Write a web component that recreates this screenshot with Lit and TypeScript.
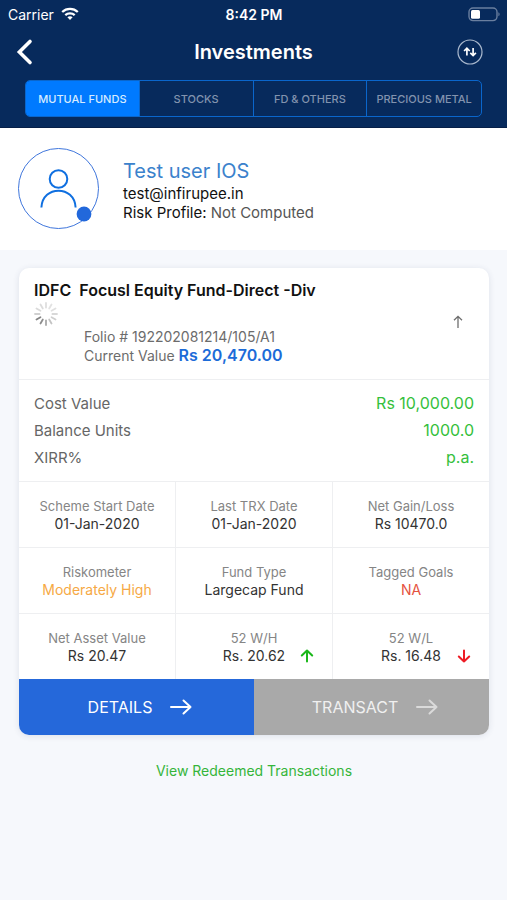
import { LitElement, css, html, svg, nothing } from "lit";
import { customElement, state } from "lit/decorators.js";
import { classMap } from "lit/directives/class-map.js";

type Tone = "plain" | "warn" | "danger";

interface Fact {
  label: string;
  value: string;
  tone?: Tone;
  trend?: "up" | "down";
}

const TABS = ["MUTUAL FUNDS", "STOCKS", "FD & OTHERS", "PRECIOUS METAL"];

const TOTALS: Fact[] = [
  { label: "Cost Value", value: "Rs 10,000.00" },
  { label: "Balance Units", value: "1000.0" },
  { label: "XIRR%", value: "p.a." },
];

const FACTS: Fact[] = [
  { label: "Scheme Start Date", value: "01-Jan-2020" },
  { label: "Last TRX Date", value: "01-Jan-2020" },
  { label: "Net Gain/Loss", value: "Rs 10470.0" },
  { label: "Riskometer", value: "Moderately High", tone: "warn" },
  { label: "Fund Type", value: "Largecap Fund" },
  { label: "Tagged Goals", value: "NA", tone: "danger" },
  { label: "Net Asset Value", value: "Rs 20.47" },
  { label: "52 W/H", value: "Rs. 20.62", trend: "up" },
  { label: "52 W/L", value: "Rs. 16.48", trend: "down" },
];

const SPOKE_GREYS = [
  "#dedede", "#e2e2e2", "#e0e0e0", "#d8d8d8", "#cfcfcf", "#c4c4c4",
  "#a8a8a8", "#8e8e8e", "#858585", "#d0d0d0", "#dadada", "#dcdcdc",
];

const arrowRight = html`
  <svg class="arrow-right" width="24" height="18" viewBox="0 0 24 18" aria-hidden="true">
    <path d="M2 9H21.5M14.5 2.5L21.5 9L14.5 15.5" fill="none" stroke="currentColor"
      stroke-width="2" stroke-linecap="round" stroke-linejoin="round" />
  </svg>`;

const trendIcon = (dir: "up" | "down") => html`
  <svg class="trend ${dir}" width="14" height="14" viewBox="0 0 14 14" aria-hidden="true">
    <path d=${dir === "up" ? "M7 12.5V1.5M1.8 6.5L7 1.5L12.2 6.5" : "M7 1.5V12.5M1.8 7.5L7 12.5L12.2 7.5"}
      fill="none" stroke="currentColor" stroke-width="2" stroke-linecap="round" stroke-linejoin="round" />
  </svg>`;

@customElement("app-header")
class AppHeader extends LitElement {
  @state() private active = 0;

  static styles = css`
    :host {
      display: block;
      background: #072a5c;
      color: #fff;
      padding: 0 25px 10px;
      border-bottom: 1px solid #061f48;
    }
    .status {
      display: grid;
      grid-template-columns: 1fr auto 1fr;
      align-items: center;
      height: 28px;
      margin: 0 -18px 0 -17px;
      font-size: 14px;
    }
    .carrier {
      display: flex;
      align-items: center;
      gap: 7px;
    }
    .time {
      font-weight: 600;
    }
    .battery {
      justify-self: end;
      display: block;
    }
    .bar {
      display: grid;
      grid-template-columns: 1fr auto 1fr;
      align-items: center;
      height: 48px;
      margin-bottom: 4px;
    }
    h1 {
      margin: 0;
      font-size: 20px;
      line-height: 24px;
      font-weight: 600;
    }
    button {
      font: inherit;
      color: inherit;
      background: none;
      border: 0;
      padding: 0;
      cursor: pointer;
    }
    .icon {
      display: flex;
    }
    .back {
      margin-left: -10px;
      justify-self: start;
    }
    .swap {
      justify-self: end;
      margin-right: -1px;
    }
    .tabs {
      display: grid;
      grid-template-columns: repeat(4, 1fr);
      border: 1px solid #0a66cc;
      border-radius: 5px;
      overflow: hidden;
    }
    .tab {
      height: 35px;
      font-size: 11px;
      font-weight: 500;
      color: #8293ae;
      white-space: nowrap;
    }
    .tab:not(:last-child) {
      border-right: 1px solid #0a66cc;
    }
    .tab.active {
      background: #007aff;
      color: #d6ebff;
    }
  `;

  render() {
    return html`
      <div class="status">
        <span class="carrier">Carrier
          <svg width="18" height="14" viewBox="0 0 18 14" fill="none" stroke="#fff" stroke-width="2.3" aria-hidden="true">
            <path d="M1.2 5C5.6 .9 12.4 .9 16.8 5" />
            <path d="M4.3 8.2C6.9 5.8 11.1 5.8 13.7 8.2" />
            <path d="M6.4 10.2C7.9 8.9 10.1 8.9 11.6 10.2L9 13Z" fill="#fff" stroke="none" />
          </svg>
        </span>
        <span class="time">8:42 PM</span>
        <svg class="battery" width="33" height="15" viewBox="0 0 33 15" aria-hidden="true">
          <rect x="2" y="1" width="28" height="12.6" rx="4" fill="none" stroke="#6a7f9f" stroke-width="1.4" />
          <rect x="4" y="3" width="9" height="8.8" rx="1.5" fill="#fff" />
          <path d="M31.4 5.2C33 5.8 33 8.6 31.4 9.2Z" fill="#6a7f9f" />
        </svg>
      </div>
      <div class="bar">
        <button class="icon back" aria-label="Back">
          <svg width="18" height="28" viewBox="0 0 18 28" aria-hidden="true">
            <path d="M15 3.5L4.4 14L15 24.5" fill="none" stroke="#fff" stroke-width="3.6" stroke-linejoin="miter" stroke-linecap="round" />
          </svg>
        </button>
        <h1>Investments</h1>
        <button class="icon swap" aria-label="Sort">
          <svg width="26" height="26" viewBox="0 0 26 26" fill="none" stroke="#fff" aria-hidden="true">
            <circle cx="13" cy="13" r="12" stroke="#a9b8cd" stroke-width="1.2" />
            <path d="M9.9 16.6V9.6M7.1 12L9.9 9.2L12.7 12M16.1 9V16M13.3 13.8L16.1 16.6L18.9 13.8" stroke-width="1.7" />
          </svg>
        </button>
      </div>
      <nav class="tabs" aria-label="Investment type">
        ${TABS.map((name, i) => html`
          <button
            class=${classMap({ tab: true, active: i === this.active })}
            aria-pressed=${i === this.active}
            @click=${() => (this.active = i)}
          >${name}</button>`)}
      </nav>
    `;
  }
}

@customElement("user-profile")
class UserProfile extends LitElement {
  static styles = css`
    :host {
      display: flex;
      align-items: center;
      gap: 23px;
      padding: 20px 18px;
      background: #fff;
    }
    svg {
      flex: none;
    }
    .who {
      padding-top: 2px;
    }
    h2,
    p {
      margin: 0;
    }
    h2 {
      font-size: 20px;
      line-height: 26px;
      font-weight: 400;
      color: #3b82cc;
    }
    p {
      font-size: 15px;
      line-height: 19px;
      color: #111;
    }
    .risk {
      color: #555;
    }
  `;

  render() {
    return html`
      <svg width="82" height="82" viewBox="0 0 82 82" fill="none" aria-hidden="true">
        <circle cx="40.5" cy="40.5" r="40" stroke="#3f76dc" />
        <circle cx="40.5" cy="31" r="8.8" stroke="#0f6fe0" stroke-width="2" />
        <path d="M23.4 59.5C24.5 37 56.5 37 57.6 59.5" stroke="#0f6fe0" stroke-width="2" />
        <circle cx="66" cy="66" r="7.4" fill="#2268db" />
      </svg>
      <div class="who">
        <h2>Test user IOS</h2>
        <p>test@infirupee.in</p>
        <p>Risk Profile: <span class="risk">Not Computed</span></p>
      </div>
    `;
  }
}

@customElement("fund-card")
class FundCard extends LitElement {
  static styles = css`
    :host {
      display: block;
      background: #fff;
      border-radius: 10px;
      box-shadow: 0 1px 6px rgba(40, 60, 100, 0.12);
      overflow: hidden;
    }
    header {
      display: grid;
      grid-template-columns: 26px 1fr auto;
      column-gap: 24px;
      align-items: center;
      padding: 11px 26px 14px 15px;
      border-bottom: 1px solid #eeeff1;
    }
    h3 {
      grid-column: 1 / 3;
      margin: 0;
      font-size: 16px;
      line-height: 22px;
      font-weight: 600;
      color: #111;
      white-space: pre-wrap;
    }
    .spinner {
      grid-row: 2;
      align-self: start;
      margin-left: -1px;
    }
    .summary {
      grid-row: 2;
      padding-top: 26px;
    }
    .rise {
      grid-area: 1 / 3 / 3;
    }
    p {
      margin: 0;
      font-size: 14px;
      line-height: 19px;
      color: #6c6c6c;
    }
    .current {
      font-size: 16px;
      font-weight: 600;
      color: #1c6bd8;
    }
    dl,
    dd {
      margin: 0;
    }
    .totals {
      padding: 10px 15px;
      font-size: 15px;
      line-height: 27px;
    }
    .total {
      display: flex;
      justify-content: space-between;
    }
    .totals dt {
      color: #666;
    }
    .totals dd {
      font-size: 16px;
      color: #35bf3c;
    }
    .facts {
      display: grid;
      grid-template-columns: repeat(3, 1fr);
      gap: 1px;
      padding-top: 1px;
      background: #eeeff1;
      text-align: center;
    }
    .fact {
      background: #fff;
      padding: 15px 0 14px;
      line-height: 18px;
    }
    .fact dt {
      font-size: 13px;
      color: #858585;
    }
    .fact dd {
      position: relative;
      font-size: 14px;
      color: #333;
    }
    .fact .warn {
      color: #f6a945;
    }
    .fact .danger {
      color: #e5533f;
    }
    .trend {
      position: absolute;
      right: 18px;
      top: 2px;
    }
    .up {
      color: #1bb81b;
    }
    .down {
      color: #ee1c25;
    }
    .actions {
      display: grid;
      grid-template-columns: 1fr 1fr;
    }
    .action {
      display: flex;
      align-items: center;
      justify-content: center;
      gap: 17px;
      height: 56px;
      padding: 0 0 0 8px;
      border: 0;
      font: inherit;
      font-size: 16px;
      cursor: pointer;
      color: #fff;
      background: #2568da;
    }
    .action.muted {
      background: #a9a9a9;
      color: #f0f0f0;
    }
    .muted .arrow-right {
      color: #dadada;
    }
  `;

  private spoke(grey: string, i: number) {
    return svg`<line x1="13" y1="6.6" x2="13" y2="2" stroke=${grey} stroke-width="1.8"
      stroke-linecap="round" transform="rotate(${i * 30} 13 13)" />`;
  }

  private fact(f: Fact) {
    return html`
      <div class="fact">
        <dt>${f.label}</dt>
        <dd class=${f.tone ?? "plain"}>${f.value}${f.trend ? trendIcon(f.trend) : nothing}</dd>
      </div>`;
  }

  render() {
    return html`
      <header>
        <h3>IDFC  Focusl Equity Fund-Direct -Div</h3>
        <svg class="spinner" width="26" height="26" viewBox="0 0 26 26" role="img" aria-label="Loading">
          ${SPOKE_GREYS.map((grey, i) => this.spoke(grey, i))}
        </svg>
        <div class="summary">
          <p>Folio # 192202081214/105/A1</p>
          <p>Current Value <span class="current">Rs 20,470.00</span></p>
        </div>
        <svg class="rise" width="10" height="14" viewBox="0 0 10 14" aria-hidden="true">
          <path d="M5 13V1.5M1 5.2L5 1.3L9 5.2" fill="none" stroke="#6e6e6e" stroke-width="1.3" />
        </svg>
      </header>
      <dl class="totals">
        ${TOTALS.map((t) => html`<div class="total"><dt>${t.label}</dt><dd>${t.value}</dd></div>`)}
      </dl>
      <dl class="facts">${FACTS.map((f) => this.fact(f))}</dl>
      <div class="actions">
        <button class="action">DETAILS ${arrowRight}</button>
        <button class="action muted">TRANSACT ${arrowRight}</button>
      </div>
    `;
  }
}

@customElement("app-root")
class AppRoot extends LitElement {
  static styles = css`
    :host {
      display: block;
      min-height: 100vh;
      background: #f6f8fc;
      font-family: Inter, "Liberation Sans", sans-serif;
    }
    main {
      display: flex;
      flex-direction: column;
      gap: 26px;
      padding: 18px 18px 26px 19px;
    }
    a {
      align-self: center;
      font-size: 14px;
      line-height: 20px;
      color: #35b53a;
      text-decoration: none;
    }
  `;

  render() {
    return html`
      <app-header></app-header>
      <user-profile></user-profile>
      <main>
        <fund-card></fund-card>
        <a href="#redeemed">View Redeemed Transactions</a>
      </main>
    `;
  }
}
